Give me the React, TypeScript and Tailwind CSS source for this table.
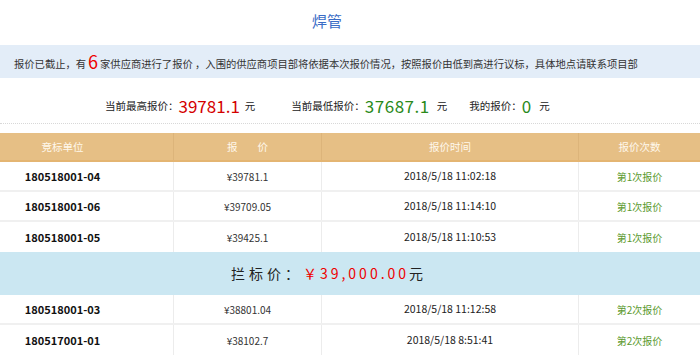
import React from "react";

const rowsTop = [
  { id: "180518001-04", price: "¥39781.1", time: "2018/5/18 11:02:18", times: "第1次报价" },
  { id: "180518001-06", price: "¥39709.05", time: "2018/5/18 11:14:10", times: "第1次报价" },
  { id: "180518001-05", price: "¥39425.1", time: "2018/5/18 11:10:53", times: "第1次报价" },
];

const rowsBottom = [
  { id: "180518001-03", price: "¥38801.04", time: "2018/5/18 11:12:58", times: "第2次报价" },
  { id: "180517001-01", price: "¥38102.7", time: "2018/5/18 8:51:41", times: "第2次报价" },
];

const font = "font-['Microsoft_YaHei','Noto_Sans_CJK_SC',sans-serif]";

function Row({ r, last }: { r: (typeof rowsTop)[number]; last?: boolean }) {
  return (
    <div
      className={`grid grid-cols-[173px_148px_257px_122px] h-[30px] ${
        last ? "" : "border-b-2 border-[#f0f0f0]"
      }`}
    >
      <div className="flex items-center justify-center pr-[48px] text-[11px] font-bold text-[#111]">
        {r.id}
      </div>
      <div className="flex items-center justify-center border-l border-[#ececec] text-[10px] text-[#333]">
        {r.price}
      </div>
      <div className="flex items-center justify-center border-l border-[#ececec] text-[10.5px] text-[#222]">
        {r.time}
      </div>
      <div className="flex items-center justify-center border-l border-[#ececec] text-[10px] text-[#5b9a2e]">
        {r.times}
      </div>
    </div>
  );
}

export default function App() {
  return (
    <div className={`w-[700px] h-[363px] bg-white overflow-hidden ${font}`}>
      {/* Title */}
      <div className="h-[45px] flex items-center justify-center pr-[46px] pb-[3px] text-[15px] text-[#3a6cc6]">
        焊管
      </div>

      {/* Notice */}
      <div className="h-[33px] bg-[#e3edf8] pl-[14px] text-[10.3px] leading-[33px] text-[#333] whitespace-nowrap">
        报价已截止，有
        <span className="text-[18px] text-[#e00] mx-[2px] align-[-1px]">6</span>
        家供应商进行了报价 ，入围的供应商项目部将依据本次报价情况，按照报价由低到高进行议标，具体地点请联系项目部
      </div>

      {/* Stats */}
      <div className="h-[46px] flex items-center pl-[105px] pt-[10px] text-[10.5px] text-[#222] border-b border-dotted border-[#d8d8d8]">
        <span>当前最高报价：</span>
        <span className="text-[17px] text-[#d40000] leading-none">39781.1</span>
        <span className="ml-[5px]">元</span>
        <span className="ml-[36px]">当前最低报价：</span>
        <span className="text-[17px] text-[#2a8a1a] leading-none tracking-[0.5px]">37687.1</span>
        <span className="ml-[7px]">元</span>
        <span className="ml-[22px]">我的报价：</span>
        <span className="text-[17px] text-[#2a8a1a] leading-none">0</span>
        <span className="ml-[8px]">元</span>
      </div>

      {/* Table */}
      <div className="mt-[9px]">
        <div className="grid grid-cols-[173px_148px_257px_122px] h-[29px] bg-[#e6bf85] border-b-2 border-[#e4b572] text-[10.5px] text-[#fff8ec]">
          <div className="flex items-center justify-center pr-[48px]">竞标单位</div>
          <div className="flex items-center justify-center border-l border-[#dcb47a]">
            报<span className="inline-block w-[20px]" />价
          </div>
          <div className="flex items-center justify-center border-l border-[#dcb47a]">报价时间</div>
          <div className="flex items-center justify-center border-l border-[#dcb47a]">报价次数</div>
        </div>
        {rowsTop.map((r, i) => (
          <Row key={r.id} r={r} last={i === rowsTop.length - 1} />
        ))}
        <div className="h-[43px] bg-[#cbe7f2] flex items-center justify-center pr-[46px] text-[14px] text-[#222]">
          <span className="tracking-[4px]">拦标价：</span>
          <span className="text-[#e00] tracking-[3px]">￥39,000.00</span>
          <span>元</span>
        </div>
        {rowsBottom.map((r, i) => (
          <Row key={r.id} r={r} last={i === rowsBottom.length - 1} />
        ))}
      </div>
    </div>
  );
}
